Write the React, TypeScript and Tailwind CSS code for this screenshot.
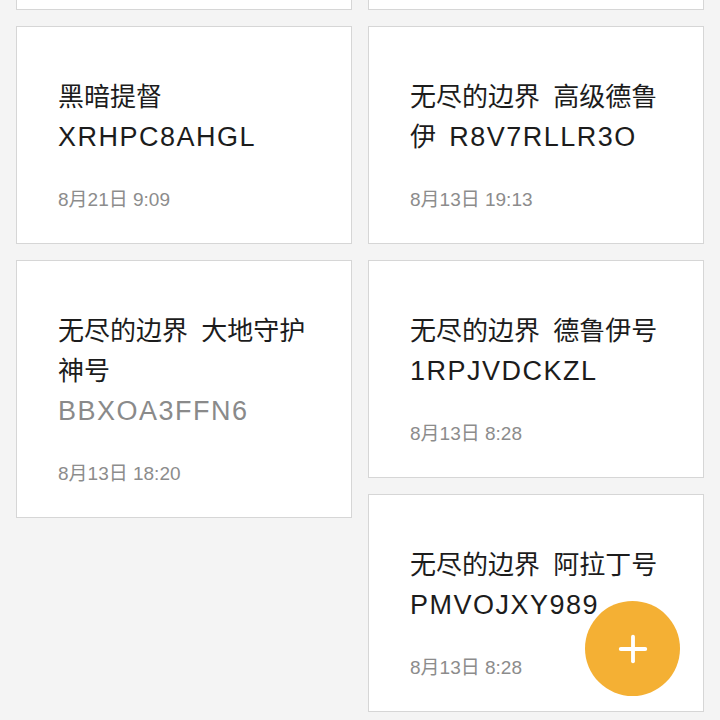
import { Plus } from "lucide-react"

type Note = {
  title: string
  code: string
  date: string
  grayCode?: boolean
}

const left: Note[] = [
  { title: "黑暗提督", code: "XRHPC8AHGL", date: "8月21日 9:09" },
  { title: "无尽的边界 大地守护神号", code: "BBXOA3FFN6", date: "8月13日 18:20", grayCode: true },
]

const right: Note[] = [
  { title: "无尽的边界 高级德鲁伊", code: "R8V7RLLR3O", date: "8月13日 19:13" },
  { title: "无尽的边界 德鲁伊号", code: "1RPJVDCKZL", date: "8月13日 8:28" },
  { title: "无尽的边界 阿拉丁号", code: "PMVOJXY989", date: "8月13日 8:28" },
]

function NoteCard({ note }: { note: Note }) {
  return (
    <div className="bg-white border border-[#d6d6d6] px-[41px] pt-[50px] pb-[29px]">
      <p className="text-[26px] leading-[40px] text-[#1c1c1c] [word-spacing:6px]">
        <span>{note.title}</span>
        {note.grayCode ? (
          <span className="block text-[27px] tracking-[1.5px] text-[#8a8a8a]">{note.code}</span>
        ) : (
          <>
            {" "}
            <span className="text-[27px] tracking-[1.5px]">{note.code}</span>
          </>
        )}
      </p>
      <p className="mt-[29px] text-[19px] leading-[28px] text-[#8c8c8c]">{note.date}</p>
    </div>
  )
}

export default function App() {
  return (
    <div
      className="relative w-[720px] h-[720px] overflow-hidden bg-[#f4f4f4]"
      style={{ fontFamily: '"Liberation Sans", "Noto Sans CJK SC", sans-serif' }}
    >
      {/* scrolled list: previous row only shows its bottom edge */}
      <div className="-mt-[90px] px-4 flex gap-4 items-start">
        <div className="w-[336px] flex flex-col gap-4">
          <div className="h-[100px] bg-white border border-[#d6d6d6]" />
          {left.map((n, i) => (
            <NoteCard key={i} note={n} />
          ))}
        </div>
        <div className="w-[336px] flex flex-col gap-4">
          <div className="h-[100px] bg-white border border-[#d6d6d6]" />
          {right.map((n, i) => (
            <NoteCard key={i} note={n} />
          ))}
        </div>
      </div>

      {/* add button */}
      <button className="absolute left-[585px] top-[601px] w-[95px] h-[95px] rounded-full bg-[#f4b034] flex items-center justify-center">
        <Plus className="w-[42px] h-[42px] text-white" strokeWidth={2.2} />
      </button>
    </div>
  )
}
